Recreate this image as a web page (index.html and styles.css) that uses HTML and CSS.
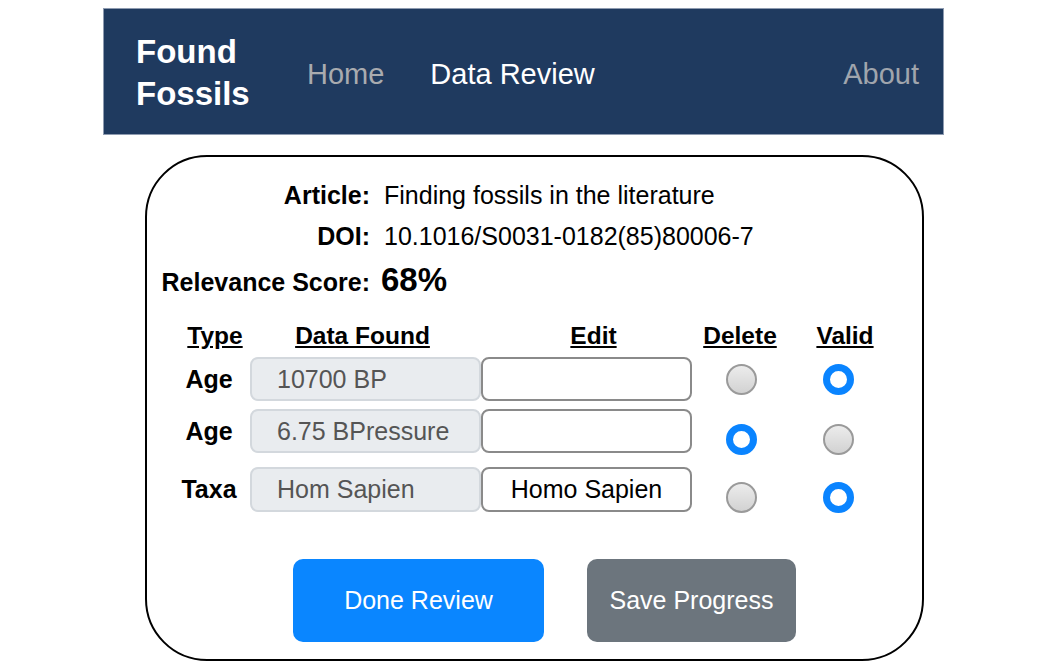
FILE: index.html
```html
<!DOCTYPE html>
<html lang="en">
<head>
<meta charset="utf-8">
<title>Found Fossils - Data Review</title>
<link rel="stylesheet" href="styles.css">
</head>
<body>
<nav class="navbar">
  <div class="brand">Found<br>Fossils</div>
  <a class="nav-link" href="#">Home</a>
  <a class="nav-link active" href="#">Data Review</a>
  <a class="nav-link about" href="#">About</a>
</nav>

<main class="card">
  <div class="info">
    <div class="label">Article:</div>
    <div class="value">Finding fossils in the literature</div>
    <div class="label">DOI:</div>
    <div class="value">10.1016/S0031-0182(85)80006-7</div>
    <div class="label rel">Relevance Score:</div>
    <div class="value score">68%</div>
  </div>

  <div class="table">
    <div class="trow head">
      <div class="th th-type">Type</div>
      <div class="th th-data">Data Found</div>
      <div class="th th-edit">Edit</div>
      <div class="th th-del">Delete</div>
      <div class="th th-valid">Valid</div>
    </div>
    <div class="trow r1">
      <div class="type">Age</div>
      <input class="found" type="text" value="10700 BP" readonly>
      <input class="edit" type="text" value="">
      <div class="rcell"><input type="radio" name="row1"></div>
      <div class="rcell"><input type="radio" name="row1" checked></div>
    </div>
    <div class="trow r2">
      <div class="type">Age</div>
      <input class="found" type="text" value="6.75 BPressure" readonly>
      <input class="edit" type="text" value="">
      <div class="rcell"><input type="radio" name="row2" checked></div>
      <div class="rcell"><input type="radio" name="row2"></div>
    </div>
    <div class="trow r3">
      <div class="type">Taxa</div>
      <input class="found" type="text" value="Hom Sapien" readonly>
      <input class="edit" type="text" value="Homo Sapien">
      <div class="rcell"><input type="radio" name="row3"></div>
      <div class="rcell"><input type="radio" name="row3" checked></div>
    </div>
  </div>

  <div class="actions">
    <button class="btn btn-primary" type="button">Done Review</button>
    <button class="btn btn-secondary" type="button">Save Progress</button>
  </div>
</main>
</body>
</html>
```

FILE: styles.css
```css
* { box-sizing: border-box; }

body {
  margin: 0;
  font-family: "Liberation Sans", Arial, sans-serif;
  color: #000;
  background: #fff;
}

.navbar {
  width: 841px;
  height: 127px;
  margin: 8px auto 0;
  background: #1f3a5f;
  border: 1px solid #8e9bb0;
  display: flex;
  align-items: center;
  padding: 0 24px 0 32px;
}

.brand {
  flex: 0 0 171px;
  color: #fff;
  font-weight: bold;
  font-size: 33px;
  line-height: 42px;
  padding-top: 2px;
}

.nav-link {
  color: #a9abaf;
  text-decoration: none;
  font-size: 29px;
  margin-right: 46px;
  margin-top: 5px;
}
.nav-link.active { color: #fff; }
.nav-link.about { margin-left: auto; margin-right: 0; color: #a0a5ad; }

.card {
  width: 779px;
  height: 506px;
  margin: 20px 0 0 145px;
  border: 2px solid #000;
  border-radius: 62px;
  padding-top: 18px;
}

.info {
  display: grid;
  grid-template-columns: 223px auto;
  column-gap: 14px;
  align-items: baseline;
  font-size: 25px;
  line-height: 41px;
}
.label { text-align: right; font-weight: bold; }
.score { font-size: 33px; font-weight: bold; line-height: 45px; margin-left: -3px; }

.table { margin: 18px 0 0 21px; font-size: 25px; }

.trow {
  display: grid;
  grid-template-columns: 82px 232px 210px 98px 96px;
  align-items: start;
}

.head { line-height: 30px; height: 30px; }
.th {
  font-weight: bold;
  text-decoration: underline;
  text-align: center;
  font-size: 24.5px;
}
.th-type { padding-left: 12px; }
.th-data { padding-right: 7px; }
.th-edit { padding-left: 13px; }
.th-del { padding-right: 2px; }
.th-valid { padding-left: 14px; }

.r1 { margin-top: 6px; }
.r2 { margin-top: 8px; }
.r3 { margin-top: 12px; }

.type {
  font-weight: bold;
  height: 44px;
  display: flex;
  align-items: center;
  justify-content: center;
}

.found, .edit {
  font-family: inherit;
  font-size: 25px;
  height: 44px;
  border-radius: 8px;
  outline: none;
  margin: 0;
}
.r3 .found, .r3 .edit, .r3 .type { height: 45px; }

.found {
  width: 231px;
  background: #e9ecef;
  border: 2px solid #d3d8dd;
  color: #555;
  padding: 0 0 0 25px;
}
.edit {
  width: 211px;
  margin-left: -1px;
  background: #fff;
  border: 2px solid #8a8a8a;
  color: #000;
  text-align: center;
  padding: 0;
}

.rcell { display: flex; justify-content: center; padding-top: 7px; }
.r2 .rcell, .r3 .rcell { padding-top: 15px; }

.rcell input {
  appearance: none;
  -webkit-appearance: none;
  margin: 0;
  width: 31px;
  height: 31px;
  border-radius: 50%;
  border: 2px solid #9a9a9a;
  background: linear-gradient(#ececec, #d2d2d2);
}
.rcell input:checked {
  border: 7px solid #0a84ff;
  background: #fff;
}

.actions {
  display: flex;
  gap: 43px;
  margin-top: 46px;
  padding-left: 146px;
}
.btn {
  height: 83px;
  border: none;
  border-radius: 10px;
  color: #fff;
  font-family: inherit;
  font-size: 25px;
  padding: 0;
}
.btn-primary { width: 251px; background: #0a86ff; }
.btn-secondary { width: 209px; background: #6c757d; }
```
